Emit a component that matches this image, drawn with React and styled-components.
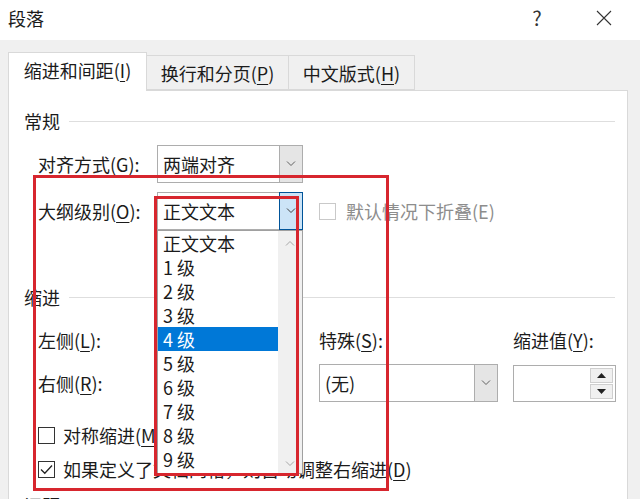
import React from 'react';
import styled, { createGlobalStyle } from 'styled-components';

const GlobalStyle = createGlobalStyle`
  html, body {
    margin: 0;
    padding: 0;
    background: #f0f0f0;
  }
  body {
    font-family: "Noto Sans CJK SC", "Noto Sans", sans-serif;
    color: #1b1b1b;
  }
  * {
    box-sizing: border-box;
  }
`;

const Window = styled.div`
  position: relative;
  width: 640px;
  height: 499px;
  overflow: hidden;
  background: #f0f0f0;
  font-size: 18px;
  line-height: 1;
`;

const TitleBar = styled.div`
  height: 40px;
  background: #fff;
  display: flex;
  align-items: center;
  padding: 0 18px 5px 8px;
`;

const Title = styled.div`
  flex: 1;
  font-size: 18px;
`;

const TitleButton = styled.div`
  width: 36px;
  height: 30px;
  display: flex;
  align-items: center;
  justify-content: center;
  color: #333;
  font-size: 20px;
  margin-left: ${p => p.gap || 0}px;
`;

const TabStrip = styled.div`
  display: flex;
  align-items: flex-end;
  height: 50px;
  padding-left: 8px;
`;

const Tab = styled.div`
  position: relative;
  width: ${p => p.width}px;
  height: ${p => (p.active ? 39 : 35)}px;
  margin-bottom: ${p => (p.active ? -1 : 0)}px;
  margin-left: ${p => (p.first ? 0 : -1)}px;
  background: ${p => (p.active ? '#fff' : '#f0f0f0')};
  border: 1px solid #d9d9d9;
  border-bottom: ${p => (p.active ? 'none' : '1px solid #d9d9d9')};
  z-index: ${p => (p.active ? 2 : 1)};
  display: flex;
  align-items: center;
  justify-content: center;
  padding-bottom: ${p => (p.active ? 4 : 0)}px;
  font-size: 18px;
`;

const Key = styled.span`
  text-decoration: underline;
  text-underline-offset: 3px;
  text-decoration-thickness: 1px;
`;

const Panel = styled.div`
  margin-left: 8px;
  width: 620px;
  height: 420px;
  background: #fff;
  border: 1px solid #d9d9d9;
  border-bottom: none;
  padding: 19px 12px 0 15px;
`;

const SectionHeader = styled.div`
  height: 22px;
  display: flex;
  align-items: center;
  gap: 9px;
  margin-top: ${p => p.top || 0}px;
  &::after {
    content: '';
    flex: 1;
    height: 1px;
    background: #dedede;
  }
`;

const FieldRow = styled.div`
  display: grid;
  grid-template-columns: 119px 146px auto;
  align-items: center;
  height: 38px;
  padding-left: 14px;
  margin-top: ${p => p.top}px;
`;

const Label = styled.div`
  white-space: nowrap;
  color: ${p => (p.disabled ? '#8d8d8d' : 'inherit')};
`;

const SelectBox = styled.div`
  position: relative;
  width: ${p => p.width}px;
  height: 38px;
  display: flex;
  border: 1px solid #adadad;
  background: #fff;
`;

const SelectValue = styled.div`
  flex: 1;
  display: flex;
  align-items: center;
  padding-left: 5px;
  white-space: nowrap;
`;

const SelectButton = styled.div`
  width: 24px;
  margin: -1px -1px -1px 0;
  display: flex;
  align-items: center;
  justify-content: center;
  background: ${p => (p.open ? '#cce4f7' : '#e5e5e5')};
  border: 1px solid ${p => (p.open ? '#005499' : '#adadad')};
`;

const CheckWrap = styled.div`
  display: flex;
  align-items: center;
  margin-left: ${p => p.indent || 0}px;
`;

const CheckBox = styled.div`
  width: 17px;
  height: 17px;
  border: 1px solid ${p => (p.disabled ? '#c9c9c9' : '#333')};
  background: #fff;
  display: flex;
  align-items: center;
  justify-content: center;
  margin-right: ${p => p.space}px;
`;

const IndentGrid = styled.div`
  display: grid;
  grid-template-columns: 119px 162px 194px 103px;
  grid-template-rows: 38px 38px;
  row-gap: 5px;
  align-items: center;
  padding-left: 14px;
  margin-top: 13px;
`;

const SpinBox = styled.div`
  width: ${p => p.width}px;
  height: 37px;
  border: 1px solid #adadad;
  background: #fff;
  display: flex;
  justify-content: flex-end;
  padding: 2px;
`;

const SpinButtons = styled.div`
  width: 23px;
  display: flex;
  flex-direction: column;
  gap: 1px;
`;

const SpinButton = styled.div`
  flex: 1;
  background: #f0f0f0;
  border: 1px solid #cfcfcf;
  display: flex;
  align-items: center;
  justify-content: center;
`;

const CheckRow = styled.div`
  height: 26px;
  display: flex;
  align-items: center;
  padding-left: 14px;
  margin-top: ${p => p.top}px;
  white-space: nowrap;
`;

const DropList = styled.div`
  position: absolute;
  top: 37px;
  left: -1px;
  width: 146px;
  height: 244px;
  border: 1px solid #a0a0a0;
  background: #fff;
  display: flex;
  z-index: 5;
`;

const ListItems = styled.div`
  flex: 1;
`;

const ListItem = styled.div`
  height: 24px;
  line-height: 24px;
  padding-left: 5px;
  white-space: nowrap;
  background: ${p => (p.selected ? '#0078d7' : 'transparent')};
  color: ${p => (p.selected ? '#fff' : '#1b1b1b')};
`;

const ScrollTrack = styled.div`
  width: 24px;
  background: #f0f0f0;
  display: flex;
  flex-direction: column;
  justify-content: space-between;
  align-items: center;
  padding: 9px 0 6px;
`;

const RedFrame = styled.div`
  position: absolute;
  left: ${p => p.x}px;
  top: ${p => p.y}px;
  width: ${p => p.w}px;
  height: ${p => p.h}px;
  border: 3px solid #d7262e;
  pointer-events: none;
  z-index: 10;
`;

const Chevron = ({ up, color = '#606060' }) => (
  <svg width="10" height="6" viewBox="0 0 10 6">
    <path d={up ? 'M1 5.5 L5 1.5 L9 5.5' : 'M1 0.5 L5 4.5 L9 0.5'} fill="none" stroke={color} strokeWidth="1" />
  </svg>
);

const Triangle = ({ up }) => (
  <svg width="9" height="5" viewBox="0 0 9 5">
    <path d={up ? 'M0 5 L4.5 0 L9 5 Z' : 'M0 0 L4.5 5 L9 0 Z'} fill="#222" />
  </svg>
);

const CloseIcon = () => (
  <svg width="16" height="16" viewBox="0 0 16 16">
    <path d="M1 1 L15 15 M15 1 L1 15" stroke="#333" strokeWidth="1.1" />
  </svg>
);

const CheckMark = () => (
  <svg width="13" height="11" viewBox="0 0 13 11">
    <path d="M1 5.5 L4.8 9.2 L12 1.5" fill="none" stroke="#222" strokeWidth="1.3" />
  </svg>
);

const levels = ['正文文本', '1 级', '2 级', '3 级', '4 级', '5 级', '6 级', '7 级', '8 级', '9 级'];

export default function App() {
  return (
    <Window>
      <GlobalStyle />
      <TitleBar>
        <Title>段落</Title>
        <TitleButton>?</TitleButton>
        <TitleButton gap={31}>
          <CloseIcon />
        </TitleButton>
      </TitleBar>

      <TabStrip>
        <Tab active first width={139}>
          缩进和间距(<Key>I</Key>)
        </Tab>
        <Tab width={143}>
          换行和分页(<Key>P</Key>)
        </Tab>
        <Tab width={127}>
          中文版式(<Key>H</Key>)
        </Tab>
      </TabStrip>

      <Panel>
        <SectionHeader>常规</SectionHeader>

        <FieldRow top={13}>
          <Label>对齐方式(G):</Label>
          <SelectBox width={146}>
            <SelectValue>两端对齐</SelectValue>
            <SelectButton>
              <Chevron />
            </SelectButton>
          </SelectBox>
        </FieldRow>

        <FieldRow top={9}>
          <Label>
            大纲级别(<Key>O</Key>):
          </Label>
          <SelectBox width={146}>
            <SelectValue>正文文本</SelectValue>
            <SelectButton open>
              <Chevron color="#404040" />
            </SelectButton>
            <DropList>
              <ListItems>
                {levels.map(l => (
                  <ListItem key={l} selected={l === '4 级'}>
                    {l}
                  </ListItem>
                ))}
              </ListItems>
              <ScrollTrack>
                <Chevron up color="#a6a6a6" />
                <Chevron color="#a6a6a6" />
              </ScrollTrack>
            </DropList>
          </SelectBox>
          <CheckWrap indent={16}>
            <CheckBox disabled space={10} />
            <Label disabled>默认情况下折叠(E)</Label>
          </CheckWrap>
        </FieldRow>

        <SectionHeader top={56}>缩进</SectionHeader>

        <IndentGrid>
          <Label>
            左侧(<Key>L</Key>):
          </Label>
          <SpinBox width={145} />
          <Label>
            特殊(<Key>S</Key>):
          </Label>
          <Label>
            缩进值(<Key>Y</Key>):
          </Label>

          <Label>
            右侧(<Key>R</Key>):
          </Label>
          <SpinBox width={145} />
          <SelectBox width={179}>
            <SelectValue>(无)</SelectValue>
            <SelectButton>
              <Chevron />
            </SelectButton>
          </SelectBox>
          <SpinBox width={103}>
            <SpinButtons>
              <SpinButton>
                <Triangle up />
              </SpinButton>
              <SpinButton>
                <Triangle />
              </SpinButton>
            </SpinButtons>
          </SpinBox>
        </IndentGrid>

        <CheckRow top={20}>
          <CheckBox space={8} />
          对称缩进(<Key>M</Key>)
        </CheckRow>
        <CheckRow top={8}>
          <CheckBox space={8}>
            <CheckMark />
          </CheckBox>
          如果定义了文档网格，则自动调整右缩进(<Key>D</Key>)
        </CheckRow>

        <SectionHeader top={12}>间距</SectionHeader>
      </Panel>

      <RedFrame x={33} y={175} w={356} h={316} />
      <RedFrame x={154} y={196} w={145} h={280} />
    </Window>
  );
}
